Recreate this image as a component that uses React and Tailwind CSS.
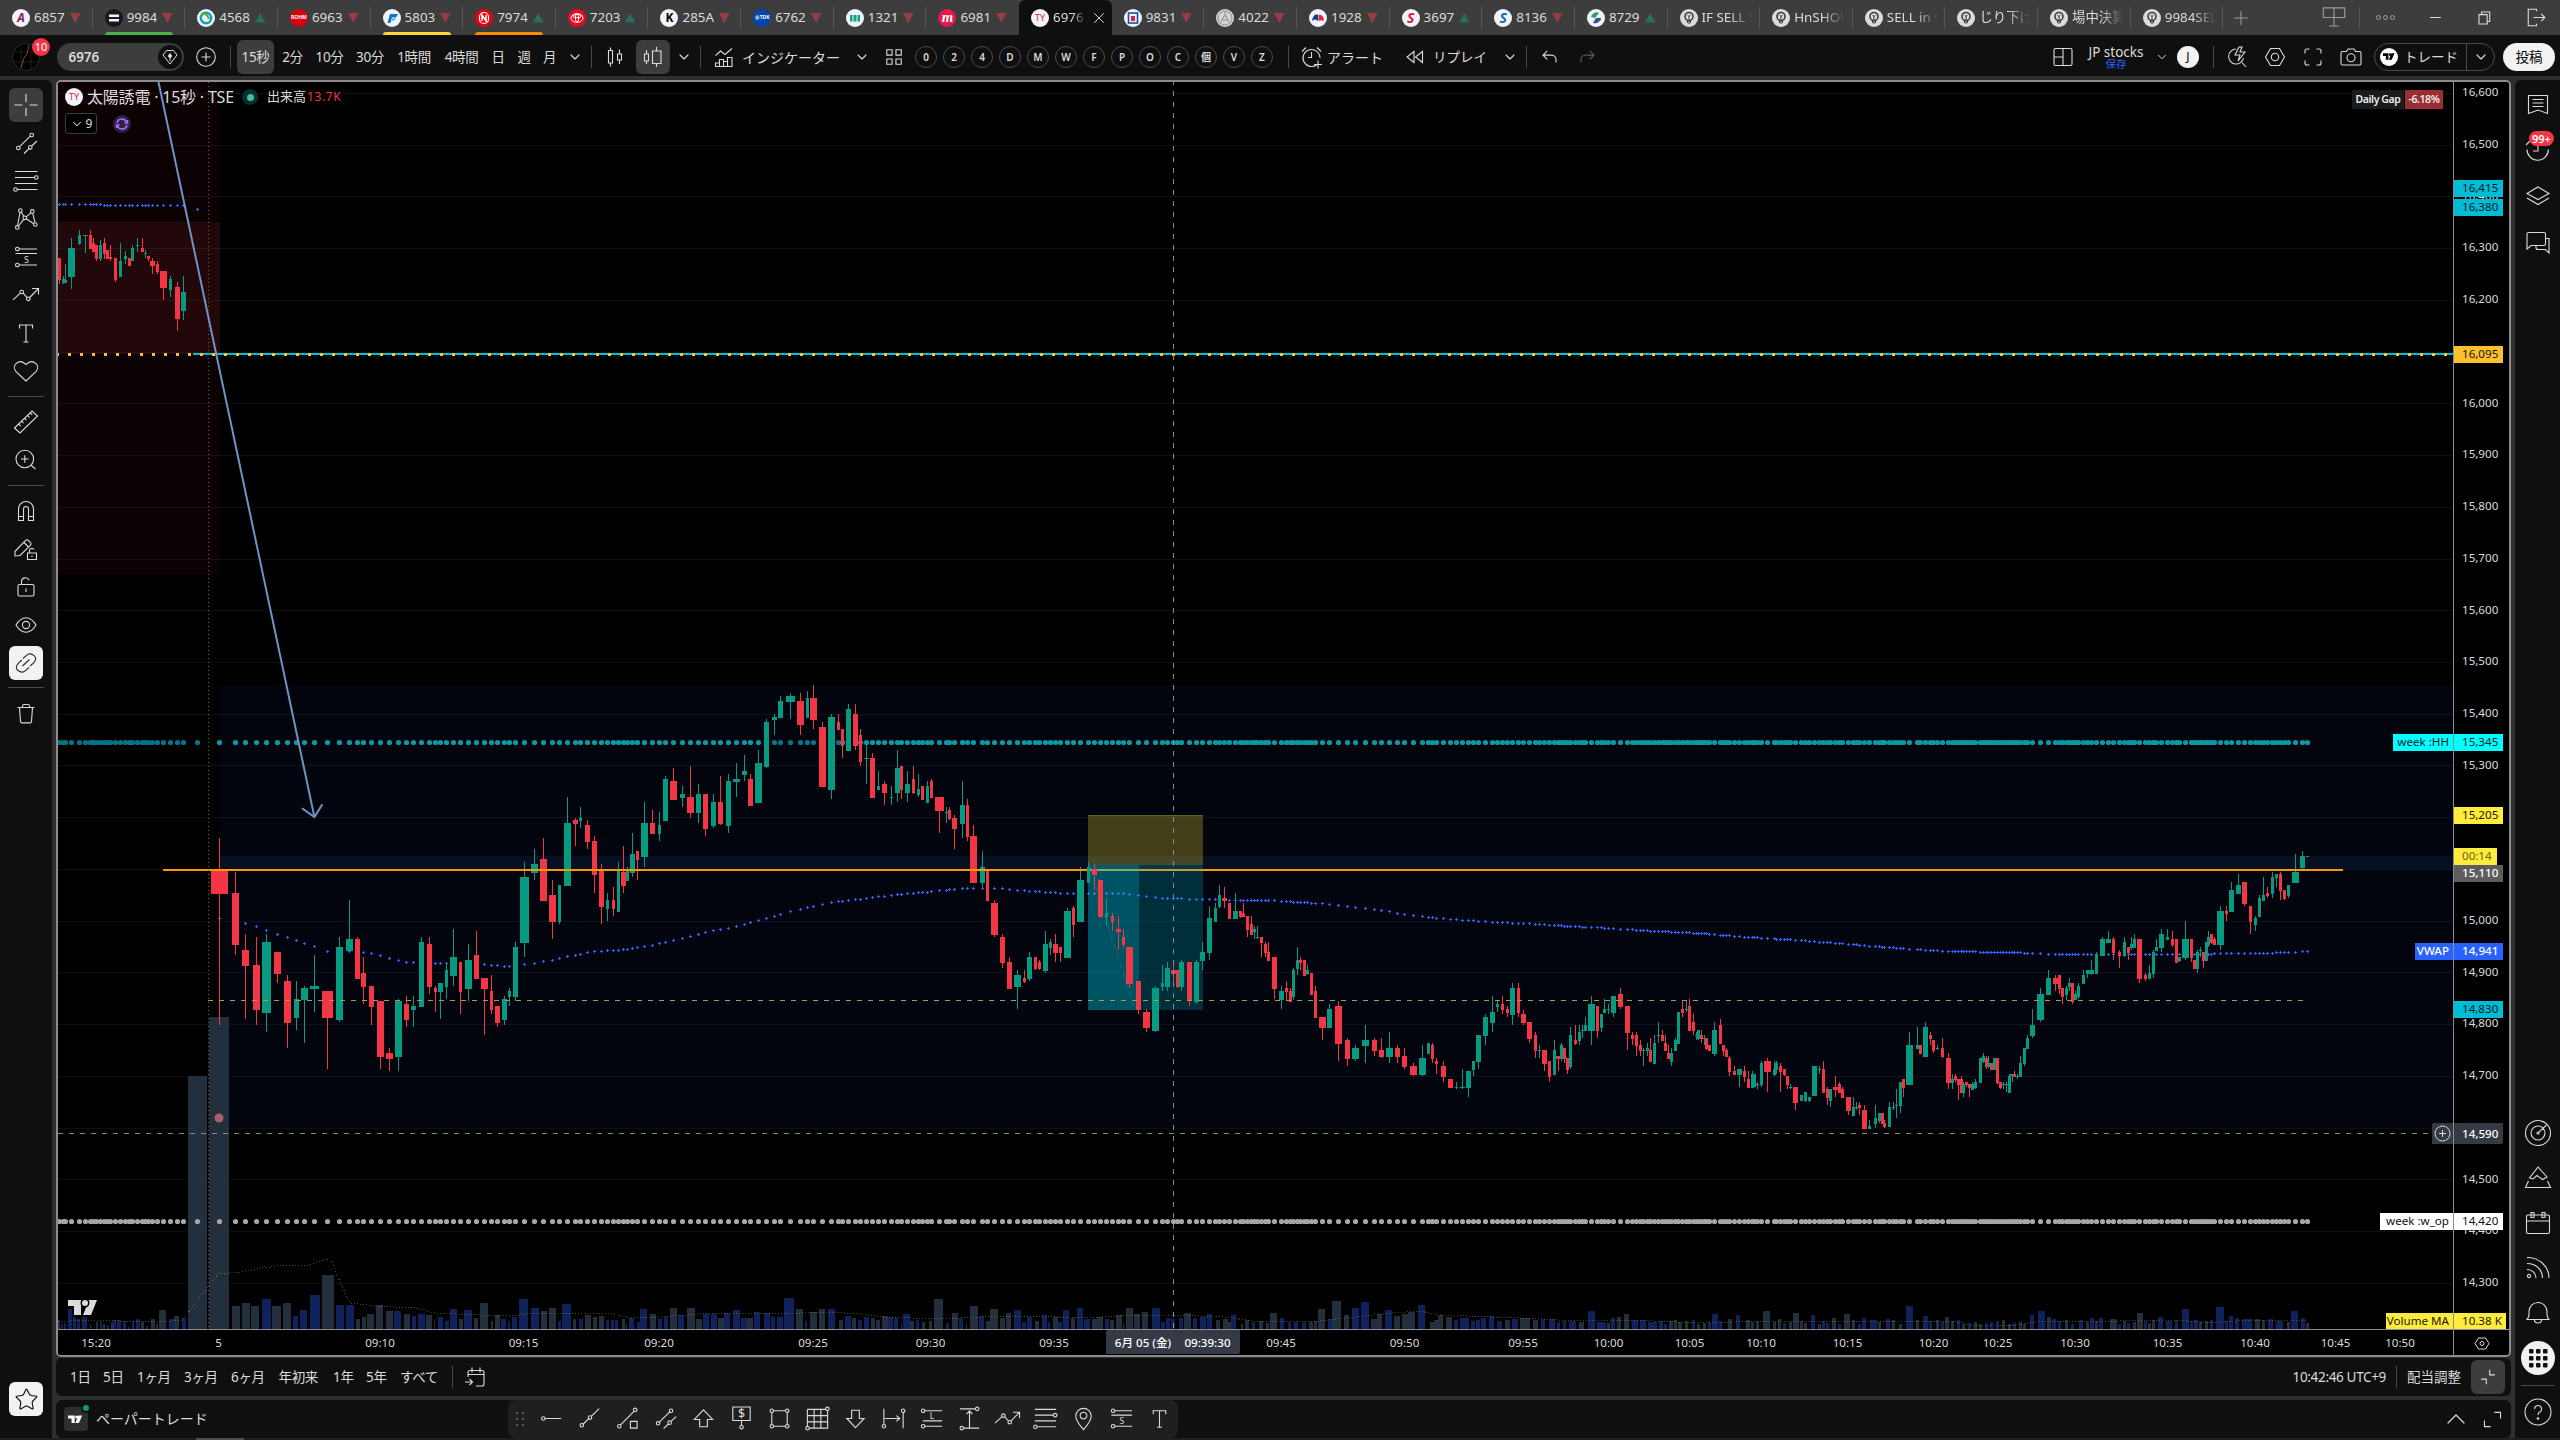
import { ChevronDown, ChevronUp, Star, Plus, X, Minus } from "lucide-react";

const dot = (x, y, r = 1.8) => `M${x - r} ${y}a${r} ${r} 0 1 0 ${2 * r} 0a${r} ${r} 0 1 0 ${-2 * r} 0`;

// 28x28 line icons
const ICONS = {
  cross: "M14 3v8M14 17v8M2.500 14h8M17.500 14h8",
  trend: `${dot(6.3, 19)}${dot(19.7, 6)}${dot(18.3, 18.3)}M7.600 17.700L18.300 7.200M12 24.500l5-4.800M19.700 17L25 12`,
  fib: `M3 4.500h22.500M3 10.500h19.500M3 16.500h22.500M5.500 22.500H25.500${dot(24.3, 10.5)}${dot(3.5, 22.5)}`,
  pattern: `${dot(8.3, 5.6)}${dot(20.3, 6.4)}${dot(12.7, 12.8)}${dot(5.3, 22.4)}${dot(23.3, 19.5)}M8 7.500L5.600 20.500M9.200 7.200L12 11.200M14.200 11.800L19 7.700M11.700 14.300L6.500 21M14.300 13.800L21.700 18.700M20.700 8.200L23 17.700`,
  forecast: `${dot(5.3, 6)}${dot(5.3, 22)}M7.500 6h17.500M3.500 10.500h21.500M7.500 22h17.500`,
  project: `M1 18.800L8 12.400M11.200 12.200L15 16.600${dot(9.7, 11)}${dot(16.3, 17.8)}M17.700 16.500L26.500 7.500M20 7.500h6.500v6`,
  text: "M7.500 9.500V6h13v3.500M14 6v17M11.500 23h5",
  heart: "M14 24L3.800 14.300C-1 8.500 7 1.500 12.800 6.500L14 7.600l1.200-1.100C21 1.500 29 8.500 24.200 14.300z",
  ruler: "M2.500 20L20 3l5.500 5L8 25zM6.500 16l2.300 2.200M9.500 13.200l2 1.900M12.500 10.300l2 1.900M15.500 7.400l2 1.900M18.300 5l2 1.900",
  zoomin: "M4 13a8.800 8.800 0 1 0 17.600 0a8.800 8.800 0 1 0-17.600 0M19 19.300L23.500 23M9 13h7.600M12.800 9.200v7.600",
  magnet: "M6.500 23.500V12a7.500 7.500 0 0 1 15 0v11.500h-5V12a2.500 2.500 0 0 0-5 0v11.500zM6.500 19.500h5M16.500 19.500h5",
  pencillock: "M3 16.500L13.500 5.500a2 2 0 0 1 3 0l1.800 1.800a2 2 0 0 1 0 3L8 20.500l-5 .5zM12 7.500l4.500 4.500M15.500 18h9v6.500h-9zM17.500 18v-2.500a2.300 2.300 0 0 1 4.300-1M20 20.500v1.500",
  unlock: "M7.500 11.500h13a1.500 1.500 0 0 1 1.500 1.500v8.500a1.500 1.500 0 0 1-1.500 1.500h-13A1.500 1.500 0 0 1 6 21.500V13a1.500 1.500 0 0 1 1.500-1.500zM9.500 11.500V9a4 4 0 0 1 7.700-1.700M14 15.500v3.500",
  eye: `M4 14C7 9 10.300 6.700 14 6.700S21 9 24 14C21 19 17.700 21.300 14 21.300S7 19 4 14z${dot(14, 14, 3.6)}`,
  link: "M11 9.500l3.500-3.200c4-3.600 11 .700 8.500 5.700c-1 2-3 3.500-5 5M17 18.500l-3.500 3.200c-4 3.600-11-.700-8.500-5.700c1-2 3-3.500 5-5M10.500 17l7-6.500",
  trash: "M5.500 8.500h17M10.500 8.500V7A1.500 1.500 0 0 1 12 5.500h4A1.500 1.500 0 0 1 17.500 7v1.500M7.500 8.500l1 14a1.500 1.500 0 0 0 1.500 1.400h8a1.500 1.500 0 0 0 1.500-1.400l1-14",
  candles: "M9.500 4.500v3M9.500 20v3.500M7.500 7.500h4V20h-4zM18.500 6.500V11M18.500 17v4M16.500 11h4v6h-4z",
  hilo: "M7.500 7v4M7.500 18v3M5.500 11h4v7h-4zM17.500 4v4M17.500 20.500V24M13.500 8h8.500v12.500h-8.500z",
  indicators: "M5.500 12.500l5-4.500 4.500 3.500L22 5.500M5.500 23.500V20h4v3.500zM9.500 23.500v-7h4v7zM13.500 23.500v-5h4v5zM17.500 23.500v-9H22v9z",
  templates: "M6 6h5.500v5.500H6zM15.500 6H21v5.500h-5.500zM6 15.500h5.500V21H6zM15.500 15.500H21V21h-5.500z",
  alert: "M19 21.500A8.500 8.500 0 1 1 22 15M13.500 9v5.500H10M4 8.500l4-4M19 4.500l4 4M20 17.500v8M16 21.500h8",
  replay: "M13 8.500v11L6 14zM21.500 8.500v11L14.500 14z",
  undo: "M11 7.500L6.500 12l4.500 4.500M6.500 12h9a5 5 0 0 1 5 5v3",
  redo: "M17 7.500l4.500 4.500-4.500 4.500M21.500 12h-9a5 5 0 0 0-5 5v3",
  layout: "M6.500 5.500h15a1.500 1.500 0 0 1 1.500 1.500v14a1.500 1.500 0 0 1-1.500 1.500h-15A1.500 1.500 0 0 1 5 21V7a1.500 1.500 0 0 1 1.500-1.500zM14 5.500v17M5 14h9",
  quick: "M13 6a7.500 7.500 0 1 0 7.500 9M19 19.500l4 4.500M16 4l-4 8h5l-2 6 7-9h-5l2-5z",
  hex: `M9.500 5.500h9L23.500 14l-5 8.500h-9L4.500 14z${dot(14, 14, 3.7)}`,
  full: "M6 10.500V8a2 2 0 0 1 2-2h2.500M17.500 6H20a2 2 0 0 1 2 2v2.500M22 17.500V20a2 2 0 0 1-2 2h-2.500M10.500 22H8a2 2 0 0 1-2-2v-2.500",
  camera: `M5.500 8.500h4L11 6h6l1.500 2.500h4a1.500 1.500 0 0 1 1.500 1.500v10.500a1.500 1.500 0 0 1-1.500 1.500h-17A1.500 1.500 0 0 1 4 20.500V10a1.500 1.500 0 0 1 1.500-1.500z${dot(14, 14.8, 4)}`,
  note: "M4.500 4.500h19v18L14 19l-9.500 3.500zM8.500 8.500h11M8.500 12h11M8.500 15.500h11",
  alarm: "M3 13.500a10.700 10.700 0 1 0 21.400 0M14 9v6H9M2 9l4-4",
  layers: "M14 5l11 6.500-11 6L3 11.500zM3 16l11 6.500L25 16",
  chat: "M4.500 4.500H20A1.500 1.500 0 0 1 21.500 6v10a1.500 1.500 0 0 1-1.500 1.500H7L3 21V6a1.500 1.500 0 0 1 1.500-1.500zM21.500 10.500h3.500V25l-3.500-3.500H14a2 2 0 0 1-2-2v-2",
  target: `${dot(14, 14, 12.5)}${dot(14, 14, 7)}${dot(14, 14, 1)}M15 13l7.500-7`,
  pyramid: "M14 3l9 10-4.500 2.500L13 11.500 9 15l-3.500-1zM4.500 17l-3 6.500h25l-3-6.500",
  calendar: "M4 6h20a1.500 1.500 0 0 1 1.500 1.500V23a1.500 1.500 0 0 1-1.500 1.500H4A1.500 1.500 0 0 1 2.500 23V7.500A1.500 1.500 0 0 1 4 6zM2.500 12h23M7 3.500h3v5H7zM18 3.500h3v5h-3z",
  rss: `${dot(5, 22, 1.6)}M3 3.500C15 3.500 25 12 25 24M3 9.500c9 0 15.500 6 15.500 14.500M3 15.500c5 0 9 3.500 9 8.500`,
  bell: "M2.500 20.500c3-1.500 2.500-4 2.500-8a9 9 0 0 1 18 0c0 4-.5 6.500 2.500 8zM10.500 21c0 4 7 4 7 0M12.500 3.500h3",
  help: `${dot(14, 14, 13)}M10.500 11a3.500 3.500 0 1 1 5 3.200c-1.200.700-1.500 1.300-1.500 2.800${dot(14, 20.5, 0.8)}`,
  goto: "M7 14V9.500a2 2 0 0 1 2-2h12a2 2 0 0 1 2 2V21a2 2 0 0 1-2 2h-6M11 4.500v5M19 4.500v5M7 11.500h16M4 19h7M8.500 16l3 3-3 3",
  collapse: "M6 16.500h6v6M22 11.500h-6v-6",
  expand: "M16 6h7v7M12 22H5v-7",
  hray: `${dot(5.5, 14)}M7.500 14H24`,
  tline: `${dot(6, 21)}${dot(14.5, 13)}M7.500 19.700L13 14.400M15.800 11.700L24 3.800`,
  info: `${dot(5.5, 22)}${dot(22, 5)}M6.800 20.500L20.700 6.500M17 17h7v7h-7z`,
  up: "M14 5l9.500 10H18v7.500h-8V15H4.500z",
  down: "M14 23.500l9-9.500h-5V5.500h-8V14H5z",
  pricenote: `M5 2h18v14H5zM14 16v5${dot(14, 23)}`,
  rect: `M8 6h12M6 8v12M22 8v12M8 22h12${dot(6, 6)}${dot(22, 6)}${dot(6, 22)}${dot(22, 22)}`,
  grid: `M3.500 4.500h19M3.500 4.500v17M24.500 6.500v17.500H5.500M10.500 4.500V24M17.500 4.500V24M3.500 11h21M3.500 17.500h21${dot(24.3, 4)}${dot(3.7, 24)}`,
  hrange: `M4 4v16M24 8v16M5 14h15M17 11l3.500 3-3.500 3${dot(4, 22)}${dot(24, 6)}`,
  longpos: `M7.500 6H25M5 16.500h20M7.500 22H25${dot(5.3, 6)}${dot(5.3, 22)}`,
  vrange: `M4 4h16M8 24h16M14 6v18M11 9.500L14 6l3 3.500${dot(22, 4)}${dot(6, 24)}`,
  fibs: `M3 4.500h22M3 10.500h19.500M3 16.500h22M5.500 22.500H25${dot(24, 10.5)}${dot(3.5, 22.5)}`,
  pin: `M14 25.500C9 20 6 15.500 6 11.500a8 8 0 0 1 16 0c0 4-3 8.500-8 14z${dot(14, 11, 3.5)}`,
  screens: "M4 4.500h20v9H4zM14 4.500v17M9.500 21.500h9",
  exit: "M15 8V6H7v16h8v-2M12 14h11M19.500 10.500L23 14l-3.500 3.500",
  restore: "M7 10h9.500v11H7zM10 10V7h9.500v11h-3",
};

function Icon({ name, size = 28, label, className = "" }) {
  return (
    <svg width={size} height={size} viewBox="0 0 28 28" fill="none" stroke="currentColor" strokeWidth={31 / size} className={`shrink-0 ${className}`}>
      <path d={ICONS[name]} />
      {label && (
        <text x={label[1]} y={label[2]} fontSize={label[3]} textAnchor="middle" fill="currentColor" stroke="none">{label[0]}</text>
      )}
    </svg>
  );
}

function TvMark({ className = "" }) {
  return (
    <svg viewBox="0 0 36 20" fill="currentColor" className={className}>
      <path d="M0 1h15v18H8V8H0zM24 19h-8l7.500-18H32z" />
      <circle cx="19.500" cy="4.500" r="3.500" />
    </svg>
  );
}

const TABS = [
  { code: "6857", mark: "A", bg: "bg-[#f0f3fa]", fg: "text-[#8b1a5c] italic text-[12px]", dir: "down" },
  { code: "9984", shape: "bars", bg: "bg-[#15181e]", dir: "down", bar: "bg-[#4caf50]" },
  { code: "4568", shape: "swirl", bg: "bg-[#f0f3fa]", dir: "up" },
  { code: "6963", mark: "ROHM", bg: "bg-[#d7000f]", fg: "text-white text-[5px]", dir: "down" },
  { code: "5803", shape: "wing", bg: "bg-[#f0f3fa]", dir: "down", bar: "bg-[#fdd835]" },
  { code: "7974", shape: "pill", bg: "bg-[#e60012]", dir: "up", bar: "bg-[#fb8c00]" },
  { code: "7203", shape: "rings", bg: "bg-[#eb0a1e]", dir: "up" },
  { code: "285A", mark: "K", bg: "bg-[#f0f3fa]", fg: "text-black text-[12px]", dir: "down" },
  { code: "6762", mark: "⊕TDK", bg: "bg-[#0046ad]", fg: "text-white text-[5px]", dir: "down" },
  { code: "1321", shape: "blocks", bg: "bg-[#f0f3fa]", dir: "down" },
  { code: "6981", mark: "m", bg: "bg-[#e6194b]", fg: "text-white italic text-[13px] font-serif", dir: "down" },
  { code: "6976", mark: "TY", bg: "bg-[#f0f3fa]", fg: "text-[#e02430] font-normal! text-[9px]", active: true },
  { code: "9831", shape: "square", bg: "bg-[#f0f3fa]", dir: "down" },
  { code: "4022", shape: "emblem", bg: "bg-[#d5d5d5]", dir: "down" },
  { code: "1928", shape: "waves", bg: "bg-[#f0f3fa]", dir: "down" },
  { code: "3697", mark: "S", bg: "bg-[#f0f3fa]", fg: "text-[#e0143c] italic text-[14px]", dir: "up" },
  { code: "8136", mark: "S", bg: "bg-[#f0f3fa]", fg: "text-[#1268b3] italic text-[14px]", dir: "down" },
  { code: "8729", shape: "sony", bg: "bg-[#f0f3fa]", dir: "up" },
  { code: "IF SELL 9", shape: "idea", bg: "bg-[#dbdbdb]" },
  { code: "HnSHOU", shape: "idea", bg: "bg-[#dbdbdb]" },
  { code: "SELL in 9", shape: "idea", bg: "bg-[#dbdbdb]" },
  { code: "じり下げ", shape: "idea", bg: "bg-[#dbdbdb]" },
  { code: "場中決算", shape: "idea", bg: "bg-[#dbdbdb]" },
  { code: "9984SEL", shape: "idea", bg: "bg-[#dbdbdb]" },
];

function LogoShape({ shape }) {
  return (
    <svg viewBox="0 0 18 18" className="size-[18px]" fill="none">
      {shape === "bars" && <path d="M4 5.500h10v2.500H4zM4 10h10v2.500H4z" fill="#f0f3fa" />}
      {shape === "wing" && <><path d="M7 5h8l-2 3.500H9L7.500 14H4.500z" fill="#1273c4" /><path d="M9 9.500h4l-2 2H8.500z" fill="#25b4d9" /></>}
      {shape === "swirl" && <><circle cx="9" cy="9" r="5.200" stroke="#0a9fc4" strokeWidth="2.400" /><path d="M4 5c3-1 7 0 8 5" stroke="#5cb531" strokeWidth="2.400" /></>}
      {shape === "pill" && <><rect x="4.500" y="3.500" width="9" height="11" rx="4.500" stroke="#fff" strokeWidth="1.200" /><path d="M7 12V6l4 6V6" stroke="#fff" strokeWidth="1.500" /></>}
      {shape === "rings" && <g stroke="#fff"><ellipse cx="9" cy="9" rx="6" ry="4.300" /><ellipse cx="9" cy="7" rx="4.200" ry="1.800" /><ellipse cx="9" cy="9" rx="1.700" ry="4" /></g>}
      {shape === "blocks" && <path d="M4 6h2.500v6.500H4zM7.500 6h3v6.500h-3zM11.500 6H14v6.500h-2.500z" fill="#0aa184" />}
      {shape === "square" && <><rect x="4.500" y="4" width="9" height="10" stroke="#1552b0" strokeWidth="1.600" /><path d="M7 7h4v5H7z" fill="#e02430" /></>}
      {shape === "emblem" && <g stroke="#8a8a8a"><circle cx="9" cy="9" r="7" /><path d="M9 3v4M5 13l3-6h2l3 6M6 11h6" /></g>}
      {shape === "waves" && <><path d="M3 12c1-6 4-8 6-6v6c-2-2-4-2-6 0z" fill="#153a9c" /><path d="M9.500 6c3-1 5 1 5.500 6-2-1-4-1-5.500 0z" fill="#e02430" /></>}
      {shape === "sony" && <><path d="M4 8c1-4 6-6 8-4l-4 5z" fill="#2ba36f" /><path d="M14 9c0 4-5 6-8 5l3-5z" fill="#35528f" /></>}
      {shape === "idea" && <g stroke="#3d3d3d"><circle cx="9" cy="7.500" r="4" strokeWidth="1.600" /><path d="M9 7v8M7.500 11v3M10.500 11v3M7.500 6l1.500 1.500L10.500 6" /></g>}
    </svg>
  );
}

function Tab({ tab, last }) {
  const fade = tab.active || tab.shape === "idea";
  return (
    <div className={`relative flex h-[35px] w-[92.65px] shrink-0 items-center pl-3 ${tab.active ? "rounded-t-md bg-[#0f0f0f]" : ""}`}>
      <div className={`flex size-[18px] shrink-0 items-center justify-center rounded-full font-bold leading-none ${tab.bg} ${tab.fg || ""}`}>
        {tab.shape ? <LogoShape shape={tab.shape} /> : tab.mark}
      </div>
      <span className={`ml-1 overflow-hidden whitespace-nowrap text-[13.4px] text-[#dbdbdb] ${fade ? "[mask-image:linear-gradient(90deg,#000_55%,transparent)]" : ""} ${tab.shape === "idea" ? "w-[51px]" : tab.active ? "w-[34px]" : ""}`}>
        {tab.code}
      </span>
      {tab.dir === "down" && <svg className="ml-[5px] h-[10px] w-[11px]"><path d="M0 0h10.500L5.250 10z" fill="#963c43" /></svg>}
      {tab.dir === "up" && <svg className="ml-[5px] h-[10px] w-[11px]"><path d="M0 9.500h10.500L5.250 0z" fill="#266e60" /></svg>}
      {tab.active && <X size={18} strokeWidth={1.3} className="ml-[3px] text-[#dbdbdb]" />}
      {tab.bar && <div className={`absolute bottom-0 left-3 h-[3px] w-[68px] rounded-t-sm ${tab.bar}`} />}
      {!tab.active && !last && <div className="absolute right-0 h-[22px] w-px bg-[#575757]" />}
    </div>
  );
}

function TabBar() {
  return (
    <div className="flex h-[35px] items-center bg-[#3d3d3d]">
      {TABS.map((tab, i) => <Tab key={i} tab={tab} last={TABS[i + 1]?.active} />)}
      <div className="flex w-[35px] justify-center text-[#9c9c9c]"><Plus size={22} strokeWidth={1.2} /></div>
      <div className="flex-1" />
      <div className="flex w-[50px] justify-center text-[#9c9c9c]"><Icon name="screens" size={30} /></div>
      <div className="h-[22px] w-px bg-[#575757]" />
      <div className="flex w-[51px] justify-center gap-[2px]">
        {[0, 1, 2].map((i) => <i key={i} className="size-[5px] rounded-full border border-[#a0a0a0]" />)}
      </div>
      <div className="flex w-[48px] justify-center text-[#dbdbdb]"><Minus size={17} strokeWidth={1.6} /></div>
      <div className="flex w-[51px] justify-center text-[#dbdbdb]"><Icon name="restore" size={24} /></div>
      <div className="flex w-[50px] justify-center text-[#dbdbdb]"><Icon name="exit" size={29} /></div>
    </div>
  );
}

const Chevron = ({ className }) => (
  <div className={`flex shrink-0 justify-center ${className}`}><ChevronDown size={16} strokeWidth={1.7} /></div>
);
const Divider = ({ className }) => (
  <div className={`flex shrink-0 justify-center ${className}`}><div className="h-[22px] w-px bg-[#4a4a4a]" /></div>
);

const INTERVALS = [
  ["2分", "w-[37px]"], ["10分", "w-[37px]"], ["30分", "w-[44px]"], ["1時間", "w-[44px]"], ["4時間", "w-[51px]"],
  ["日", "w-[22px]"], ["週", "w-[30px]"], ["月", "w-[21px]"],
];

function TopToolbar() {
  return (
    <div className="flex h-[41px] items-center whitespace-nowrap bg-[#0f0f0f] pt-[3px] text-[14px] text-[#dbdbdb] [&>div]:shrink-0">
      <div className="relative flex w-[52px] justify-center">
        <svg width="28" height="28" viewBox="0 0 28 28"><circle cx="14" cy="14" r="13.500" fill="#000" stroke="#2a2a2a" /><path d="M2 9h24M2 19h24M9 2v24M19 2v24" stroke="#1c1c1c" /><path d="M9 25l3-10 3-4 2-9" stroke="#8a4a2c" fill="none" /></svg>
        <span className="absolute -top-[5px] left-[32px] flex size-[18px] items-center justify-center rounded-full bg-[#f23645] text-[11px] text-white">10</span>
      </div>
      <div className="ml-[4.500px] flex h-7 w-[127px] items-center justify-between rounded-full bg-[#3d3d3d] pl-3 pr-[2px] text-[13.400px] font-semibold">
        6976
        <span className="flex size-6 items-center justify-center rounded-full bg-[#0f0f0f]">
          <svg width="18" height="18" viewBox="0 0 18 18" fill="none" stroke="currentColor"><path d="M5.500 2.500h7L16 7l-7 9-7-9zM9 5v8" /><circle cx="9" cy="8" r="1.500" fill="currentColor" /></svg>
        </span>
      </div>
      <div className="flex w-[45px] justify-center">
        <svg width="20" height="20" fill="none" stroke="currentColor" strokeWidth="1.100"><circle cx="10" cy="10" r="9.300" /><path d="M10 5.500v9M5.500 10h9" /></svg>
      </div>
      <Divider className="w-[3px]" />
      <div className="ml-[5.500px] flex h-[34px] w-[37px] items-center justify-center rounded-md bg-[#3d3d3d] text-[13.500px] tracking-tight">15秒</div>
      {INTERVALS.map(([name, w]) => <div key={name} className={`text-center text-[13.500px] tracking-tight ${w}`}>{name}</div>)}
      <Chevron className="w-[30px]" />
      <Divider className="w-[2px]" />
      <div className="flex w-[46px] justify-center -mr-[2px]"><Icon name="candles" /></div>
      <div className="flex h-[34px] w-[34px] items-center justify-center rounded-md bg-[#3d3d3d]"><Icon name="hilo" /></div>
      <Chevron className="w-[28px]" />
      <Divider className="w-[4px]" />
      <div className="flex w-[40px] justify-center pl-1"><Icon name="indicators" /></div>
      <div className="w-[98px]">インジケーター</div>
      <Chevron className="w-[44px]" />
      <div className="flex w-[20px] justify-center"><Icon name="templates" size={27} /></div>
      <div className="ml-2 flex">
        {["0", "2", "4", "D", "M", "W", "F", "P", "O", "C", "個", "V", "Z"].map((c) => (
          <div key={c} className="flex w-7 justify-center">
            <span className="flex size-[22px] items-center justify-center rounded-full border border-[#4a4a4a] text-[10px] font-semibold">{c}</span>
          </div>
        ))}
      </div>
      <Divider className="w-[24px]" />
      <div className="flex w-[24px] justify-center"><Icon name="alert" /></div>
      <div className="w-[62px] text-center">アラート</div>
      <div className="ml-3 flex w-[34px] justify-center"><Icon name="replay" /></div>
      <div className="w-[56px] text-center text-[13.500px]">リプレイ</div>
      <Chevron className="ml-2 w-[28px]" />
      <Divider className="w-[5px]" />
      <div className="flex w-[41px] justify-center"><Icon name="undo" size={26} /></div>
      <div className="flex w-[34px] justify-center text-[#5c5c5c]"><Icon name="redo" size={26} /></div>
      <div className="flex-1" />
      <div className="flex w-[28px] justify-center"><Icon name="layout" /></div>
      <div className="w-[78px] text-center leading-none">
        <div className="text-[13.500px] leading-[14px]">JP stocks</div>
        <div className="text-[10.500px] leading-[11px] text-[#2962ff]">保存</div>
      </div>
      <Chevron className="w-[14px]" />
      <div className="flex w-[38px] justify-center"><span className="flex size-[22px] items-center justify-center rounded-full bg-[#f2f2f2] text-[12px] text-black">J</span></div>
      <Divider className="w-[13px]" />
      <div className="flex w-[34px] justify-center"><Icon name="quick" /></div>
      <div className="flex w-[42px] justify-center"><Icon name="hex" /></div>
      <div className="flex w-[34px] justify-center"><Icon name="full" /></div>
      <div className="flex w-[41px] justify-center"><Icon name="camera" /></div>
      <div className="ml-[3px] flex h-7 w-[121px] items-center rounded-full border border-[#4a4a4a] pl-[5px]">
        <span className="flex size-[18px] items-center justify-center rounded-full bg-white text-black"><TvMark className="w-[13px]" /></span>
        <span className="ml-[6px] w-[62px] text-[13.500px]">トレード</span>
        <div className="h-full w-px bg-[#4a4a4a]" />
        <Chevron className="flex-1" />
      </div>
      <div className="ml-2 mr-[5px] flex h-7 w-[52px] items-center justify-center rounded-full bg-[#f2f2f2] text-[13.500px] text-black">投稿</div>
    </div>
  );
}

function LeftToolbar() {
  const cell = "flex h-[38px] shrink-0 items-center justify-center";
  const line = "mx-2 h-px shrink-0 bg-[#4a4a4a]";
  return (
    <div className="flex w-[52px] shrink-0 flex-col rounded-tr-md bg-[#0f0f0f] pt-[6px] text-[#dbdbdb]">
      <div className={cell}><div className="flex h-[34px] w-[34px] items-center justify-center rounded-md bg-[#3d3d3d]"><Icon name="cross" /></div></div>
      <div className={cell}><Icon name="trend" /></div>
      <div className={cell}><Icon name="fib" /></div>
      <div className={cell}><Icon name="pattern" /></div>
      <div className={cell}><Icon name="forecast" label={["S", 14.5, 20, 9]} /></div>
      <div className={cell}><Icon name="project" /></div>
      <div className={cell}><Icon name="text" /></div>
      <div className={cell}><Icon name="heart" /></div>
      <div className={`${line} mb-[6px] mt-[6px]`} />
      <div className={cell}><Icon name="ruler" /></div>
      <div className={cell}><Icon name="zoomin" /></div>
      <div className={`${line} mb-[6px] mt-[6px]`} />
      <div className={cell}><Icon name="magnet" /></div>
      <div className={cell}><Icon name="pencillock" /></div>
      <div className={cell}><Icon name="unlock" /></div>
      <div className={cell}><Icon name="eye" /></div>
      <div className={cell}><div className="flex h-[34px] w-[34px] items-center justify-center rounded-md bg-[#f2f2f2] text-[#2e2e2e]"><Icon name="link" /></div></div>
      <div className={`${line} mb-[6px] mt-[5px]`} />
      <div className={cell}><Icon name="trash" /></div>
      <div className="flex-1" />
      <div className="mx-auto mb-[22px] flex h-[34px] w-[34px] items-center justify-center rounded-md bg-[#f2f2f2] text-[#0f0f0f]"><Star size={25} strokeWidth={1.1} /></div>
    </div>
  );
}

function RightToolbar() {
  const cell = "relative flex h-[45px] shrink-0 items-center justify-center";
  return (
    <div className="flex w-[45px] shrink-0 flex-col rounded-tl-md bg-[#0f0f0f] pt-[2px] text-[#dbdbdb]">
      <div className={cell}><Icon name="note" /></div>
      <div className={cell}>
        <Icon name="alarm" />
        <span className="absolute left-[14px] top-[4px] rounded-full bg-[#f23645] px-[3px] text-[11px] font-semibold leading-[15px] text-white">99+</span>
      </div>
      <div className={`${cell} h-[47px]!`}><Icon name="layers" /></div>
      <div className={cell}><Icon name="chat" /></div>
      <div className="flex-1" />
      <div className={cell}><Icon name="target" /></div>
      <div className={cell}><Icon name="pyramid" /></div>
      <div className={cell}><Icon name="calendar" /></div>
      <div className={cell}><Icon name="rss" /></div>
      <div className={cell}><Icon name="bell" /></div>
      <div className={cell}>
        <svg width="34" height="34" viewBox="0 0 34 34" className="shrink-0">
          <circle cx="17" cy="17" r="17" fill="#f2f2f2" />
          {[8, 15, 22].map((x) => [8, 15, 22].map((y) => <rect key={`${x}-${y}`} x={x} y={y} width="4.500" height="4.500" rx="1" fill="#0f0f0f" />))}
        </svg>
      </div>
      <div className="mx-[6px] mt-[5px] h-px shrink-0 bg-[#4a4a4a]" />
      <div className="flex h-[52px] shrink-0 items-center justify-center"><Icon name="help" /></div>
    </div>
  );
}

// Each segment keeps its own origin and resolution: x, body width, high, body top, body bottom, low, colour
const SEGMENTS = [
  { x0: 0, y0: 80, sx: 3, sy: 2.376, rows: `178 9 423 423 475 485 r;190 8 465 472 482 485 g;197 8 437 475 482 482 g;214 21 375 399 468 497 g;238 9 356 368 390 392 g;256 15 368 368 371 410 g;271 9 356 368 402 402 r;280 8 375 387 409 409 r;289 9 392 392 425 430 r;301 9 380 392 425 430 g;313 9 375 387 413 425 r;322 8 404 404 425 425 r;331 8 392 420 425 430 r;346 9 423 423 475 480 r;361 9 387 430 468 468 g;376 8 406 418 425 437 g;389 8 423 423 443 443 r;397 8 392 399 430 430 g;412 8 375 392 394 408 g;427 8 375 399 409 409 r;436 8 404 411 414 423 g;445 8 418 418 425 430 r;457 15 423 430 443 461 r;472 8 430 437 456 461 r;490 21 454 454 494 523 r;511 8 466 473 499 516 g;532 15 480 492 568 596 r;550 15 466 504 549 570 g` },
  { x0: 180, y0: 660, sx: 2.24, sy: 3, rows: `88 39 534 627 702 1095 r;124 15 636 699 855 885 r;147 15 822 870 918 1077 r;171 15 831 915 1050 1095 r;194 20 822 846 1059 1116 g;218 15 876 876 942 969 r;241 16 945 963 1089 1164 r;261 12 963 1017 1074 1110 g;279 16 978 984 1020 1149 g;301 20 885 978 987 1056 g;330 25 993 993 1074 1227 r;357 15 831 861 1080 1086 g;380 16 720 837 873 873 g;397 11 831 837 957 957 r;411 12 891 939 981 1032 r;429 12 978 978 1041 1095 r;449 16 1023 1023 1191 1227 r;469 16 1164 1179 1197 1233 r;489 15 1017 1023 1191 1233 g;507 11 1008 1032 1080 1101 r;523 12 1008 1038 1050 1101 g;541 12 831 846 1041 1041 g;558 11 831 852 981 1002 r;572 7 978 984 996 1056 r;583 11 969 969 996 1077 g;597 6 906 930 981 1017 g;613 15 807 891 948 978 g;628 7 906 906 996 1062 r;646 16 852 900 987 1023 g;664 11 813 885 957 957 r;682 16 954 954 987 1125 r;698 7 945 993 1050 1062 r;711 11 1038 1038 1089 1101 r;726 11 1008 1017 1080 1095 g;738 6 984 993 1011 1038 g;751 11 846 861 1011 1023 g;772 20 606 651 849 891 g;794 16 567 612 639 660 g;814 16 534 597 723 723 r;834 15 660 705 786 837 r;850 6 675 675 786 792 g;868 16 411 489 678 678 g;886 12 474 480 492 558 r;897 6 441 474 483 504 g;912 11 480 495 546 567 r;928 11 528 543 645 699 r;944 11 612 627 741 792 r;957 7 699 720 747 783 g;971 6 681 720 747 768 r;982 7 606 627 756 756 g;993 11 558 636 678 699 r;1003 7 621 627 663 663 g;1013 11 519 582 639 651 g;1024 7 573 573 600 660 r;1040 15 426 489 591 621 g;1058 11 450 489 522 522 r;1074 6 456 495 522 543 g;1087 11 348 357 483 483 g;1105 15 324 363 420 420 r;1125 11 378 402 414 441 g;1143 15 318 411 459 474 r;1161 11 372 402 459 489 g;1177 11 402 402 507 528 r;1195 12 402 426 498 504 g;1210 11 348 426 492 495 r;1228 11 342 363 498 519 g;1246 15 309 357 366 411 g;1264 11 285 333 345 363 g;1278 12 342 357 438 438 r;1296 16 270 309 429 429 g;1313 11 177 186 321 324 g;1331 11 162 171 180 225 g;1345 11 108 123 174 174 g;1367 21 99 108 126 177 g;1390 16 99 123 195 225 r;1405 7 93 114 174 174 g;1419 16 75 114 180 207 r;1439 16 186 201 381 381 r;1459 15 162 171 390 417 g;1475 6 162 186 210 210 r;1484 6 207 207 258 294 r;1497 11 132 147 273 273 g;1513 11 132 162 258 270 r;1524 7 207 225 306 318 r;1538 11 252 294 297 372 g;1551 11 279 294 414 414 r` },
  { x0: 860, y0: 660, sx: 2.24, sy: 3, rows: `41 7 333 378 390 390 g;55 11 363 372 399 435 r;70 6 378 411 414 435 g;84 12 270 324 399 426 g;93 6 318 318 390 417 r;106 11 333 372 399 426 g;120 7 318 357 399 402 r;131 6 342 387 405 411 g;140 6 378 378 420 420 r;151 7 363 378 429 429 g;160 7 357 363 414 414 r;178 20 411 411 453 519 r;194 6 441 456 459 489 g;200 7 441 450 477 480 r;211 11 465 474 507 567 r;229 11 363 435 492 534 g;240 7 417 435 531 543 r;254 16 495 528 669 669 r;274 11 573 621 669 684 g;285 7 627 627 723 723 r;301 16 720 729 825 831 r;319 11 822 831 909 924 r;334 11 891 906 987 987 r;353 16 930 945 981 1047 g;368 7 930 954 966 969 r;379 11 876 891 957 963 g;393 6 891 891 927 930 r;402 6 900 906 927 930 r;415 11 813 852 933 939 g;426 7 837 846 864 885 g;438 12 822 852 879 906 r;449 6 861 861 879 906 r;465 16 744 753 894 894 g;478 7 738 744 795 831 r;494 16 621 660 786 786 g;511 7 606 621 669 669 g;525 12 612 627 645 690 r;538 12 660 660 771 774 r;552 8 714 759 771 798 g;565 7 759 768 786 813 r;578 12 768 807 816 870 r;590 7 807 831 855 861 r;604 16 861 861 972 984 r;623 12 963 963 1050 1062 r;642 16 1047 1056 1104 1116 r;662 16 978 984 1113 1116 g;677 7 915 969 981 993 g;688 11 906 924 981 993 g;702 12 915 930 942 981 r;711 7 930 930 981 984 r;720 11 900 906 981 993 g;738 12 906 906 1020 1038 r;753 11 900 906 1026 1032 g;767 11 846 876 903 930 g;782 11 738 774 879 900 g;796 7 729 744 786 786 g;805 7 675 705 741 744 g;816 11 681 714 723 744 r;827 7 729 729 777 777 r;841 11 699 753 777 777 g;852 7 753 753 771 774 r;858 8 729 759 771 771 r;868 6 768 768 810 831 r;877 6 768 792 825 825 r;883 7 798 807 816 837 g;890 7 798 831 834 837 g;899 7 831 831 849 891 r;908 6 846 852 879 891 r;915 6 846 876 903 903 r;928 11 891 891 987 1017 r;944 11 978 993 1020 1047 g;955 7 963 984 996 1020 r;965 8 984 993 1026 1026 r;971 6 924 930 1011 1020 g;980 7 861 900 927 945 g;987 7 891 900 909 930 r;995 7 900 900 948 948 r;1002 7 915 930 942 945 g;1011 7 939 939 1005 1005 r;1020 7 978 993 1074 1074 r;1036 16 1071 1071 1104 1140 r;1051 11 1032 1047 1104 1104 g;1072 16 1023 1038 1152 1203 r;1092 12 1134 1140 1197 1218 r;1110 16 1155 1164 1197 1203 g;1132 16 1095 1140 1158 1209 g;1152 11 1134 1140 1173 1188 r;1168 11 1134 1170 1191 1194 r;1186 16 1116 1164 1191 1209 g;1204 12 1155 1164 1191 1209 r;1219 11 1164 1188 1221 1227 r;1240 16 1209 1218 1245 1248 r;1260 16 1155 1194 1245 1248 g;1273 8 1149 1149 1182 1182 g;1282 7 1149 1155 1197 1209 r;1291 7 1194 1203 1212 1242 r;1307 12 1203 1218 1251 1266 r;1322 11 1257 1257 1284 1284 r;1336 7 1266 1281 1284 1287 g;1349 11 1227 1281 1284 1287 g;1363 12 1233 1233 1284 1311 g;1374 7 1203 1203 1230 1248 g;1385 11 1125 1125 1206 1227 g;1401 11 1062 1071 1128 1155 g;1416 11 1008 1056 1089 1116 g;1428 6 1020 1032 1041 1056 g;1439 7 1008 1032 1050 1062 r;1450 7 1038 1047 1059 1071 r;1461 11 969 984 1065 1095 g;1475 6 969 984 1059 1071 r;1486 11 1050 1062 1089 1095 r;1499 11 1086 1086 1137 1149 r;1513 7 1116 1125 1173 1194 r;1522 7 1155 1170 1173 1194 g;1533 11 1170 1170 1212 1233 r;1544 7 1203 1203 1251 1266 r;1556 7 1140 1170 1245 1245 g` },
  { x0: 1540, y0: 820, sx: 1.96, sy: 3, rows: `36 8 708 708 717 753 r;42 7 669 675 717 723 g;48 6 684 684 717 729 r;53 5 714 714 750 762 r;60 6 621 645 741 747 g;70 6 615 660 672 675 r;77 6 615 636 663 675 g;83 6 615 630 633 654 g;89 6 591 615 633 633 g;101 14 528 552 633 675 g;113 6 558 558 633 654 r;121 6 582 582 624 636 g;126 6 537 567 579 579 g;134 6 552 567 570 582 g;144 10 528 528 579 591 g;158 10 504 522 561 567 r;171 9 558 558 639 690 r;181 6 636 645 657 675 r;189 6 636 645 678 708 r;197 6 660 675 693 708 r;203 7 684 690 693 738 g;211 6 669 684 693 708 g;217 6 654 690 726 726 r;224 6 645 669 732 732 g;232 7 606 645 648 669 g;240 6 630 645 663 663 r;246 6 645 669 693 693 r;251 5 675 699 717 717 r;258 6 684 699 726 738 g;266 6 654 660 693 693 g;271 6 576 576 672 672 g;279 6 540 567 579 591 r;287 6 540 567 570 576 g;293 6 537 558 633 633 r;301 6 582 606 633 645 r;307 5 636 645 648 660 g;311 6 630 630 657 660 g;317 6 630 645 657 669 r;322 7 645 654 657 675 g;326 6 654 654 687 690 r;332 6 675 675 693 693 r;342 10 606 630 702 708 g;354 6 597 615 672 672 r;360 6 675 675 693 708 r;365 5 684 690 711 711 r;371 6 708 714 756 768 r;381 6 738 753 765 765 r;391 10 747 747 765 801 g;401 6 738 753 771 786 r;409 6 753 777 804 804 r;417 6 753 762 804 804 g;421 5 762 762 801 801 g;426 6 786 792 795 807 g;434 6 723 729 795 801 g;446 14 714 723 756 816 r;459 7 723 747 765 768 g;463 5 723 729 750 762 g;471 6 729 738 756 816 r;479 6 747 747 765 768 r;485 6 768 768 795 807 r;491 6 792 801 804 807 g;501 10 801 801 849 870 r;512 5 825 825 843 843 g;520 6 816 816 843 846 g;528 6 831 831 843 846 g;538 10 738 738 828 828 g;548 6 738 747 750 762 g;556 6 723 747 819 819 r;564 6 801 807 834 855 r;569 6 807 807 843 861 g;579 10 768 801 810 831 r;587 6 786 792 819 819 r;593 6 801 807 834 834 r;605 10 831 831 873 885 r;614 6 831 861 888 888 g;620 6 846 861 864 870 g;626 6 846 855 864 885 r;636 10 855 870 927 927 r;646 6 900 918 927 927 g;658 6 855 894 912 924 g;665 6 879 879 903 909 g;671 6 879 879 912 912 r;676 4 900 909 921 924 r;685 6 846 861 921 921 g;693 6 846 861 864 870 g;699 6 807 855 858 894 g;707 6 786 786 858 879 g;713 5 777 777 804 831 r;724 14 636 675 795 795 g;740 6 621 675 687 687 g;746 6 675 675 702 702 r;756 9 606 621 711 711 g;765 6 636 645 657 675 r;771 6 660 660 693 699 r;779 6 675 684 687 690 g;789 6 654 684 711 714 r;801 10 699 714 789 807 r;809 6 762 777 789 807 g;814 6 762 768 780 786 r;820 6 777 777 795 840 r;826 6 768 777 819 819 r;830 6 786 792 819 831 g;836 6 786 786 795 801 r;842 6 792 792 804 831 r;848 6 786 792 810 810 g;854 6 777 786 804 807 g;863 6 714 714 789 789 g;869 6 699 708 726 729 g;875 6 708 714 741 747 r;879 6 708 729 741 744 g;885 7 729 729 750 750 r;891 6 714 714 750 750 g;897 6 714 714 789 792 r;903 6 786 786 804 807 r;908 6 786 792 795 807 g;914 6 786 792 795 816 g;920 6 762 768 819 819 g;926 8 762 762 768 786 g;930 6 753 762 771 771 r;936 6 762 768 771 777 g;942 6 708 729 771 771 g;950 6 684 684 732 738 g;955 5 645 654 687 687 g;965 10 567 615 648 654 g;981 14 504 522 600 606 g;997 10 450 474 525 525 g;1010 10 465 474 492 513 r;1018 6 465 465 507 522 r;1024 6 504 504 531 552 r;1032 6 498 504 525 540 g;1038 6 474 489 501 513 g;1044 6 489 489 546 552 r;1050 6 513 522 540 540 g;1055 5 489 498 531 537 g;1065 6 450 465 492 492 g;1073 6 450 450 462 474 g;1081 9 420 450 462 465 g;1091 6 396 402 462 462 g;1102 9 351 357 408 408 g;1114 10 333 357 369 369 g;1124 6 351 357 399 420 r;1136 6 390 396 408 444 r;1146 6 351 366 408 411 g;1153 5 381 381 399 420 r;1159 6 351 372 384 390 g;1165 6 342 357 384 384 g;1175 10 357 357 477 489 r;1187 6 459 465 477 483 r;1195 6 435 459 477 477 g;1202 5 390 396 462 474 g;1208 6 357 381 393 393 g;1218 9 327 342 384 396 g;1230 6 327 351 360 360 g;1240 6 333 357 375 381 r;1248 6 357 357 429 429 r;1253 5 411 411 423 426 g;1265 14 303 357 414 420 g;1277 6 357 357 414 426 r;1283 6 420 420 447 447 r;1289 6 390 396 447 459 g;1295 6 381 390 393 411 g;1300 6 396 396 423 444 r;1306 6 366 366 423 423 g;1310 5 333 351 375 381 g;1316 6 342 342 369 372 r;1322 6 351 357 375 375 r;1334 14 258 273 375 390 g;1346 5 258 273 282 303 r;1355 10 186 210 276 276 g;1369 10 162 195 222 222 g;1381 10 186 186 252 258 r;1393 6 258 258 306 342 r;1402 6 288 294 315 333 g;1410 6 225 234 291 291 g;1418 6 171 225 243 243 g;1426 6 201 219 228 234 r;1436 6 156 171 222 234 g;1444 5 162 162 174 201 g;1451 6 156 162 213 240 r;1459 6 210 210 237 240 r;1467 6 195 195 228 234 g;1481 14 102 156 189 189 g;1495 9 93 108 144 147 g;1504 6 108 108 111 111 g` },
];

const CANDLES = SEGMENTS.flatMap(({ x0, y0, sx, sy, rows }) =>
  rows.split(";").map((row) => {
    const [x, w, h, t, b, l, c] = row.split(" ");
    const y = (v) => Math.round(y0 + v / sy);
    const width = Math.round((w / sx - 1) / 2) * 2 + 1;
    return { x: Math.floor(x0 + x / sx), w: width, h: y(h), t: y(t), b: y(b), l: y(l), color: c === "g" ? "#089981" : "#f23645" };
  })
).sort((a, b) => a.x - b.x);

// Volume bars: x, width, top, s = slate / b = blue
const VOLUME_SEGMENTS = [
  { x0: 0, y0: 1240, sx: 2.529, rows: `149 5 240 s;157 4 252 b;165 4 249 b;177 10 207 b;187 7 230 b;199 8 238 b;213 12 230 b;229 3 252 s;245 6 246 s;255 4 243 b;263 4 252 s;272 4 254 b;282 5 246 s;290 8 240 b;302 10 240 b;314 8 243 b;326 4 261 b;337 6 243 b;349 11 237 b;361 7 246 s;372 4 258 b;387 10 237 s;397 5 252 s;411 18 210 s;433 12 237 b;446 13 228 s;465 10 234 b;597 20 198 s;622 20 189 s;645 20 198 s;674 22 177 b;699 23 198 s;726 20 189 s;747 13 228 b;767 17 210 b;796 25 165 b;829 31 105 s;860 20 195 b;885 20 195 b;905 10 237 s;921 10 231 s;937 17 222 s;960 18 195 s;985 18 213 s;1005 18 213 b;1029 16 222 s;1047 10 228 b;1066 17 222 b;1085 16 225 s;1099 3 243 s;1114 12 231 b;1129 9 243 b;1147 18 207 b;1166 10 237 s;1183 20 210 b;1204 10 234 s;1224 20 189 s;1245 5 243 s;1259 13 225 s;1273 13 237 b;1288 5 243 b;1301 13 231 b;1324 22 177 b;1353 20 204 b;1375 16 213 s;1397 18 204 s;1415 8 243 b;1432 22 192 b;1453 8 237 s;1469 10 237 b;1487 16 225 s;1505 10 231 s;1521 13 228 s;1537 8 240 b;1549 8 240 b;1560 8 240 b` },
  { x0: 500, y0: 1300, sx: 2.178, rows: `270 7 57 s;277 3 72 s;286 11 54 b;301 6 66 b;312 15 27 b;333 14 42 s;348 9 57 b;361 9 51 b;377 15 24 s;394 13 45 b;416 18 24 s;433 12 57 s;449 14 42 b;466 14 42 b;480 12 54 s;495 13 39 b;515 16 30 b;531 13 54 b;545 12 54 s;560 14 36 b;581 14 39 b;595 9 51 b;610 12 51 b;629 22 -6 b;652 15 27 s;667 5 63 b;682 15 36 s;702 14 27 s;722 15 27 b;742 9 60 s;757 12 48 b;771 8 54 s;783 8 60 b;797 10 51 b;813 9 54 s;824 8 60 s;837 12 48 s;851 10 51 b;862 9 54 b;874 3 69 s;885 15 42 b;898 9 63 s;910 6 60 b;923 6 66 s;937 7 63 s;955 20 -3 s;975 6 69 b;990 13 39 s;1005 9 54 b;1016 3 69 s;1032 17 18 s;1048 11 48 b;1063 8 63 s;1076 17 27 s;1094 10 54 s;1107 10 39 s;1127 16 30 b;1140 8 66 b;1153 11 51 b;1169 8 63 s;1185 11 45 b;1197 5 66 b;1209 11 51 s;1220 8 66 b;1233 13 30 b;1248 9 54 s;1264 14 24 b;1279 12 57 b;1294 10 57 s;1307 12 51 s;1321 8 57 b;1332 8 60 s;1348 13 45 s;1358 3 69 s;1371 15 24 s;1387 12 42 s;1405 14 36 s;1429 17 24 b;1445 9 66 b;1455 8 54 b;1465 8 57 b` },
  { x0: 1180, y0: 1290, sx: 1.3754, rows: `2 6 84 b;11 10 69 s;21 5 84 b;31 8 81 b;41 7 72 b;52 6 90 s;62 7 87 s;68 4 96 s;74 7 75 b;85 3 102 s;92 6 90 s;101 4 96 b;112 6 93 s;120 4 99 s;128 9 69 s;141 6 84 b;150 4 96 b;160 6 96 b;170 5 96 b;180 6 96 s;186 4 93 s;194 9 57 s;207 8 87 b;216 13 33 s;229 7 75 s;241 9 54 b;255 11 36 b;267 8 87 s;275 7 72 s;287 9 60 b;298 8 78 s;309 8 72 s;318 9 66 s;332 10 45 b;346 5 96 s;352 5 90 s;359 7 75 s;370 8 81 s;380 6 90 b;391 12 84 b;403 6 93 b;410 6 90 b;418 7 84 b;428 7 78 b;440 7 93 b;450 7 90 s;460 8 87 b;475 14 84 s;489 7 90 s;500 6 87 b;512 8 87 b;540 10 93 b;552 7 96 s;566 9 63 b;580 12 96 b;596 6 84 b;604 6 81 s;614 7 72 s;626 8 90 b;637 8 90 b;650 12 96 b;662 6 93 b;675 6 93 s;688 6 96 s;736 8 72 b;756 5 87 s;768 6 75 b;781 5 90 s;807 10 63 s;824 4 87 s;847 8 69 s;871 6 75 b;900 6 84 s;917 8 72 s;940 5 84 b;953 9 90 b;974 6 87 b;1004 10 48 b;1026 7 78 b;1055 5 81 s;1172 6 75 b;1184 9 63 b;1195 6 81 s;1202 5 87 b;1240 6 90 b;1254 6 84 b;1267 6 84 b;1284 10 87 s;1320 8 69 s;1348 7 81 b;1360 8 93 b;1383 10 57 b;1398 6 90 b;1431 11 51 b;1446 6 78 b;1454 6 84 b;1468 14 87 b;1482 7 87 s;1500 7 87 b;1512 10 93 b;1533 10 63 b;1545 6 84 b` },
];

const AXIS_Y = 1329;
const VOLUMES = VOLUME_SEGMENTS.flatMap(({ x0, y0, sx, rows }) =>
  rows.split(";").map((row) => {
    const [x, w, t, c] = row.split(" ");
    return { x: Math.round(x0 + (x - w / 2) / sx), w: Math.max(1, Math.round(w / sx)), t: Math.round(y0 + t / 3), c };
  })
);
// quiet stretches between the peaks
CANDLES.filter((c) => c.x > 1550).forEach((c, i) => {
  if (!VOLUMES.some((v) => c.x >= v.x - 2 && c.x <= v.x + v.w + 1)) {
    VOLUMES.push({ x: c.x - 1, w: Math.min(c.w, 3), t: 1320 + ((i * 7) % 5), c: c.color === "#089981" ? "s" : "b" });
  }
});

const BAR_XS = [...CANDLES.map((c) => c.x), 197].sort((a, b) => a - b);

const VWAP = [[58, 204], [101, 204], [103, 205], [190, 205], [197, 209], [198, 918], [219, 918], [246, 923], [267, 930], [287, 937], [304, 943], [327, 951], [349, 951], [372, 953], [389, 958], [406, 962], [440, 963], [484, 964], [510, 966], [525, 964], [550, 960], [568, 956], [594, 951], [626, 949], [650, 945], [673, 940], [700, 933], [736, 926], [770, 917], [790, 911], [831, 902], [873, 897], [895, 894.5], [928, 891.5], [963, 888], [1000, 888], [1030, 891], [1068, 893], [1120, 893], [1160, 897.5], [1200, 899], [1235, 900], [1268, 900], [1300, 902], [1330, 904], [1380, 910], [1420, 916], [1450, 919], [1500, 922], [1540, 924], [1570, 926], [1612, 928], [1640, 930], [1700, 933], [1750, 937], [1800, 940], [1850, 944], [1900, 948], [1950, 951], [2010, 952], [2060, 954], [2200, 954], [2225, 953], [2265, 953], [2307, 951]];
const vwapAt = (x) => {
  const i = Math.max(1, VWAP.findIndex((p) => p[0] >= x));
  const [a, b] = [VWAP[i - 1], VWAP[i]];
  return Math.round(a[1] + ((b[1] - a[1]) * (x - a[0])) / (b[0] - a[0]));
};

const VOLUME_MA = "58,1322 80,1320 120,1321 145,1322 170,1321 183,1320 190,1310 208,1287 218,1274 240,1272 262,1268 285,1265 310,1265 326,1259 332,1262 340,1282 350,1303 375,1306 415,1308 435,1313 480,1315 510,1316 536,1313 605,1313 634,1318 660,1317 700,1314 745,1313 800,1313 830,1312 860,1314 885,1317 940,1319 980,1317 1020,1316 1060,1317 1100,1317 1130,1315 1173,1315 1224,1317 1253,1321 1318,1321 1354,1317 1391,1313 1420,1311 1442,1315 1493,1317 1543,1319 1573,1321 1631,1320 1703,1323 1762,1321 1834,1322 1907,1321 1951,1321 1972,1325 2016,1325 2045,1321 2118,1321 2176,1320 2212,1323 2249,1320 2307,1320";

const PRICES = Array.from({ length: 24 }, (_, i) => 16600 - i * 100);
const priceY = (p) => 93.5 + (16600 - p) * 0.5173;
const fmt = (p) => p.toLocaleString("en-US");

const TIMES = [["15:20", 96], ["5", 218.5], ["09:10", 380], ["09:15", 523.5], ["09:20", 659], ["09:25", 813], ["09:30", 930.5], ["09:35", 1054], ["09:45", 1281], ["09:50", 1404.5], ["09:55", 1523], ["10:00", 1608.5], ["10:05", 1689.5], ["10:10", 1761], ["10:15", 1847.5], ["10:20", 1933.5], ["10:25", 1997.5], ["10:30", 2075], ["10:35", 2167.5], ["10:40", 2255], ["10:45", 2335.5], ["10:50", 2400]];

const TAGS = [
  { text: "16,415", y: 180, bg: "#00bcd4", fg: "#0b1a1d" },
  { text: "16,380", y: 199, bg: "#00bcd4", fg: "#0b1a1d" },
  { text: "16,095", y: 346, bg: "#fbc02d", fg: "#1a1405" },
  { text: "15,345", y: 734, bg: "#00ffff", fg: "#06201f", label: "week :HH", lx: 2393 },
  { text: "15,205", y: 807, bg: "#ffeb3b", fg: "#1a1805" },
  { text: "00:14", y: 848, bg: "#ffeb3b", fg: "#6a6020", w: 43 },
  { text: "15,110", y: 865, bg: "#5d5d5d", fg: "#fff", medium: true },
  { text: "14,941", y: 943, bg: "#2962ff", fg: "#fff", medium: true, label: "VWAP", lx: 2415 },
  { text: "14,830", y: 1001, bg: "#00bcd4", fg: "#0b1a1d" },
  { text: "14,420", y: 1213, bg: "#ffffff", fg: "#111", label: "week :w_op", lx: 2380 },
  { text: "10.38 K", y: 1313, bg: "#ffeb3b", fg: "#1a1805", label: "Volume MA", lx: 2386, w: 52, h: 16 },
];

function PriceTag({ tag }) {
  const h = tag.h || 17;
  return (
    <g fontWeight={tag.medium ? 500 : 400}>
      {tag.label && <rect x={tag.lx} y={tag.y} width={2453 - tag.lx} height={h} rx="1" fill={tag.bg} />}
      {tag.label && <text x="2449" y={tag.y + 12.3} textAnchor="end" fill={tag.fg}>{tag.label}</text>}
      <rect x="2454" y={tag.y} width={tag.w || 49} height={h} rx="1" fill={tag.bg} />
      <text x="2462" y={tag.y + 12.3} fill={tag.fg}>{tag.text}</text>
    </g>
  );
}

function Chart() {
  return (
    <svg viewBox="58 82 2451 1273" className="block size-full text-[11.600px]" shapeRendering="crispEdges">
      <rect x="58" y="82" width="2451" height="1273" fill="#000" />
      <rect x="58" y="82" width="162" height="492" fill="#0d0203" />
      <rect x="58" y="222" width="162" height="132" fill="#22070b" />
      <rect x="219" y="685" width="2234" height="443" fill="#02050d" />
      <rect x="219" y="856" width="2234" height="13" fill="#071022" />
      {PRICES.map((p) => <rect key={p} x="58" y={Math.floor(priceY(p))} width="2395" height="1" fill="#fff" fillOpacity="0.06" />)}

      <rect x="188" y="1076" width="19" height={AXIS_Y - 1076} fill="#242f3d" />
      <rect x="209" y="1017" width="20" height={AXIS_Y - 1017} fill="#242f3d" />
      {VOLUMES.map((v, i) => <rect key={i} x={v.x} y={v.t} width={v.w} height={AXIS_Y - v.t} fill={v.c === "b" ? "#10225c" : "#242f3d"} />)}
      <polyline points={VOLUME_MA} fill="none" stroke="#ffeb3b" strokeOpacity="0.3" strokeWidth="1" strokeDasharray="1 2" />

      {BAR_XS.map((x, i) => (
        <g key={i} shapeRendering="auto">
          <circle cx={x + 0.5} cy="742.500" r="2.600" fill={x < 210 || (x > 770 && x < 842) ? "#05748a" : "#0a9aa3"} />
          <circle cx={x + 0.5} cy="1221.500" r="2.600" fill="#a6a6a6" />
        </g>
      ))}
      {BAR_XS.map((x, i) => <path key={i} d={`M${x - 1} ${vwapAt(x) + 0.5}h3M${x + 0.5} ${vwapAt(x) - 1}v3`} stroke="#2962ff" />)}
      {CANDLES.map((c, i) => (
        <g key={i} fill={c.color}>
          <rect x={c.x} y={c.h} width="1" height={Math.max(1, c.l - c.h)} />
          <rect x={c.x - (c.w - 1) / 2} y={c.t} width={c.w} height={Math.max(1, c.b - c.t)} />
        </g>
      ))}

      <rect x="163" y="869" width="2180" height="2" fill="#ff9800" />
      <rect x="1088" y="815" width="115" height="50" fill="#ffeb3b" fillOpacity="0.250" />
      <rect x="1088" y="815" width="115" height="1" fill="#ffeb3b" fillOpacity="0.200" />
      <rect x="1088" y="865" width="115" height="145" fill="#00bcd4" fillOpacity="0.230" />
      <rect x="1088" y="865" width="51" height="145" fill="#00bcd4" fillOpacity="0.260" />
      <path d="M1090 868L1134 1008" stroke="#787b86" strokeOpacity="0.400" strokeDasharray="5 5" shapeRendering="auto" />
      {CANDLES.filter((c) => c.x > 1086 && c.x < 1204).map((c) => (
        <g key={c.x} fill={c.color} fillOpacity="0.900">
          <rect x={c.x} y={c.h} width="1" height={Math.max(1, c.l - c.h)} />
          <rect x={c.x - (c.w - 1) / 2} y={c.t} width={c.w} height={Math.max(1, c.b - c.t)} />
        </g>
      ))}

      <path d="M193 354H2453" stroke="#00bcd4" strokeWidth="2" />
      <path d="M56 354.500H2453" stroke="#fbc02d" strokeWidth="3" strokeDasharray="3 9" />
      <path d="M208 1000.500H2304" stroke="#a89c48" strokeDasharray="5 6" />
      <path d="M208.500 82V1329" stroke="#6e6428" strokeDasharray="1 3" />
      <path d="M158.500 82L314.400 817M302 808.300L314.400 817L322.400 804.300" fill="none" stroke="#6f93c4" strokeWidth="2" shapeRendering="auto" />
      <circle cx="219" cy="1118" r="4.500" fill="#ad5c6c" shapeRendering="auto" />
      <path d="M1173.500 82V1329" stroke="#7f8a9b" strokeDasharray="5 6" strokeDashoffset="2" />
      <path d="M58 1133.500H2430" stroke="#7f8a9b" strokeDasharray="5 6" />

      <rect x="2453" y="82" width="1" height="1273" fill="#8c8c8c" />
      <rect x="58" y={AXIS_Y} width="2451" height="1" fill="#8c8c8c" />
      <g fill="#dbdbdb">
        {PRICES.map((p) => {
          if (p === 15100 || p === 14600) return null;
          return <text key={p} x="2462" y={priceY(p) + 2.7}>{fmt(p)}</text>;
        })}
        {TIMES.map(([t, x]) => <text key={t} x={x} y="1347" textAnchor="middle">{t}</text>)}
      </g>
      {TAGS.map((tag) => <PriceTag key={tag.text} tag={tag} />)}
      <rect x="2432" y="1123" width="71" height="21" rx="2" fill="#363a45" />
      <rect x="2453" y="1123" width="1" height="21" fill="#8c8c8c" />
      <g stroke="#dbdbdb" fill="none" shapeRendering="auto"><circle cx="2442.500" cy="1133.500" r="7.500" /><path d="M2439 1133.500h7M2442.500 1130v7" /></g>
      <text x="2462" y="1137.500" fill="#fff" fontWeight="500">14,590</text>
      <rect x="1106" y="1330" width="134" height="24" rx="2" fill="#363a45" />
      <text x="1143" y="1347" textAnchor="middle" fill="#fff" fontWeight="500">6月 05 (金)</text>
      <text x="1207.500" y="1347" textAnchor="middle" fill="#fff" fontWeight="500">09:39:30</text>
      <g stroke="#dbdbdb" fill="none" shapeRendering="auto"><path d="M2478.500 1338h7l3.500 5.500-3.500 5.500h-7l-3.500-5.500z" /><circle cx="2482" cy="1343.500" r="2" /></g>
      <g shapeRendering="auto" fill="#dbdbdb" stroke="#000" strokeWidth="3" paintOrder="stroke">
        <path d="M68 1300h13v15h-7v-9h-6zM91 1315h-8l6-15h8z" /><circle cx="85" cy="1303" r="3" />
      </g>
    </svg>
  );
}

function Legend() {
  return (
    <div className="absolute left-[7px] top-[4px] text-[#dbdbdb]">
      <div className="flex h-[22px] items-center whitespace-nowrap">
        <span className="flex size-[18px] items-center justify-center rounded-full bg-[#f0f3fa] text-[9px] text-[#e02430]">TY</span>
        <span className="ml-1 w-[147px] text-[16px] tracking-[-0.200px]">太陽誘電 · 15秒 · TSE</span>
        <span className="ml-2 flex size-4 items-center justify-center rounded-full bg-[#06302a]"><i className="size-[7px] rounded-full bg-[#42bda8]" /></span>
        <span className="ml-[9px] text-[13px]">出来高</span>
        <span className="ml-[1px] text-[12px] tracking-[0.600px] text-[#f23645]">13.7K</span>
      </div>
      <div className="mt-[5px] flex items-center">
        <div className="flex h-[21px] w-8 items-center justify-center gap-[2px] rounded-[3px] border border-[#3d3d3d] bg-black text-[12px]"><ChevronDown size={14} strokeWidth={1.8} />9</div>
        <span className="ml-4 flex size-[18px] items-center justify-center rounded-full bg-[#2f1f4a] text-[#a873f0]">
          <svg width="14" height="14" viewBox="0 0 14 14" fill="none" stroke="currentColor" strokeWidth="1.500"><path d="M2 6a5 5 0 0 1 9.500-1M12 8a5 5 0 0 1-9.500 1M12.500 3v3h-3M1.500 11V8h3" /></svg>
        </span>
      </div>
    </div>
  );
}

const RANGES = [
  ["1日", "w-[33px]"], ["5日", "w-[34px]"], ["1ヶ月", "w-[47px]"], ["3ヶ月", "w-[47px]"], ["6ヶ月", "w-[47.500px]"],
  ["年初来", "w-[54.500px]"], ["1年", "w-[33px]"], ["5年", "w-[34px]"], ["すべて", "w-[46px]"],
];

function RangeBar() {
  return (
    <div className="flex h-[38px] items-center whitespace-nowrap rounded-md bg-[#0f0f0f] pl-[14px] text-[13.500px] tracking-tight text-[#dbdbdb]">
      {RANGES.map(([name, w]) => <div key={name} className={w}>{name}</div>)}
      <Divider className="ml-[3px] w-[6px]" />
      <div className="flex w-[39px] justify-center"><Icon name="goto" /></div>
      <div className="flex-1" />
      <div className="text-[13.500px]">10:42:46 UTC+9</div>
      <Divider className="w-[21px]" />
      <div className="w-[64px] tracking-normal">配当調整</div>
      <div className="mr-[6px] flex h-[34px] w-[34px] items-center justify-center rounded-md bg-[#3d3d3d]"><Icon name="collapse" size={24} /></div>
    </div>
  );
}

const DRAW_TOOLS = [
  ["hray"], ["tline"], ["info"], ["trend"], ["up"], ["pricenote", ["$", 14, 13.5, 13]], ["rect"], ["grid"], ["down"], ["hrange"],
  ["longpos", ["L", 14.5, 15, 9]], ["vrange"], ["project"], ["fibs"], ["pin"], ["forecast", ["S", 14.5, 20, 9]], ["text"],
];

function PaperBar() {
  return (
    <div className="flex h-[38px] items-center rounded-md bg-[#0f0f0f] text-[#dbdbdb]">
      <div className="flex w-[452px] items-center pl-2">
        <div className="relative flex size-6 items-center justify-center rounded-[4px] bg-[#2e2e2e] text-white">
          <TvMark className="w-[16px]" />
          <i className="absolute -right-[3px] -top-[4px] size-[10px] rounded-full border-2 border-[#0f0f0f] bg-[#089981]" />
        </div>
        <span className="ml-2 pb-[2px] text-[14px]">ペーパートレード</span>
      </div>
      <div className="flex h-[38px] w-[670px] items-center rounded-lg bg-[#1f1f1f] pb-px pl-2">
        <div className="mr-[10px] grid grid-cols-2 gap-x-[5px] gap-y-[4px]">
          {Array.from({ length: 6 }, (_, i) => <i key={i} className="size-[2px] bg-[#5c5c5c]" />)}
        </div>
        {DRAW_TOOLS.map(([name, label]) => (
          <div key={name} className="flex w-[38px] shrink-0 justify-center"><Icon name={name} label={label} size={27} /></div>
        ))}
      </div>
      <div className="flex-1" />
      <ChevronUp size={32} strokeWidth={0.9} className="mr-[8px]" />
      <Icon name="expand" size={25} className="mr-[6px]" />
    </div>
  );
}

export default function App() {
  return (
    <div className="flex h-[1440px] w-[2560px] flex-col overflow-hidden bg-[#2e2e2e] [font-family:'Noto_Sans','Noto_Sans_CJK_JP',sans-serif]">
      <TabBar />
      <TopToolbar />
      <div className="mt-1 flex h-[1358px] gap-1">
        <LeftToolbar />
        <div className="flex w-[2455px] shrink-0 flex-col">
          <div className="relative h-[1277px] shrink-0 overflow-hidden rounded-[5px] border-2 border-[#8c8c8c] bg-black">
            <Chart />
            <Legend />
            <div className="absolute right-[66px] top-[8px] flex h-[19px] items-stretch text-[10.500px] font-semibold leading-[19px] text-[#ececec]">
              <span className="w-[52px] whitespace-nowrap bg-[#1a1b1e] text-center tracking-[-0.400px]">Daily Gap</span>
              <span className="ml-px w-[38px] bg-[#992f33] text-center tracking-[-0.400px]">-6.18%</span>
            </div>
          </div>
          <div className="mt-px"><RangeBar /></div>
          <div className="mt-1"><PaperBar /></div>
        </div>
        <RightToolbar />
      </div>
      <div className="flex h-[2px] bg-[#1f1f1f]"><div className="ml-[196px] w-12 bg-[#4d4d4d]" /></div>
    </div>
  );
}
